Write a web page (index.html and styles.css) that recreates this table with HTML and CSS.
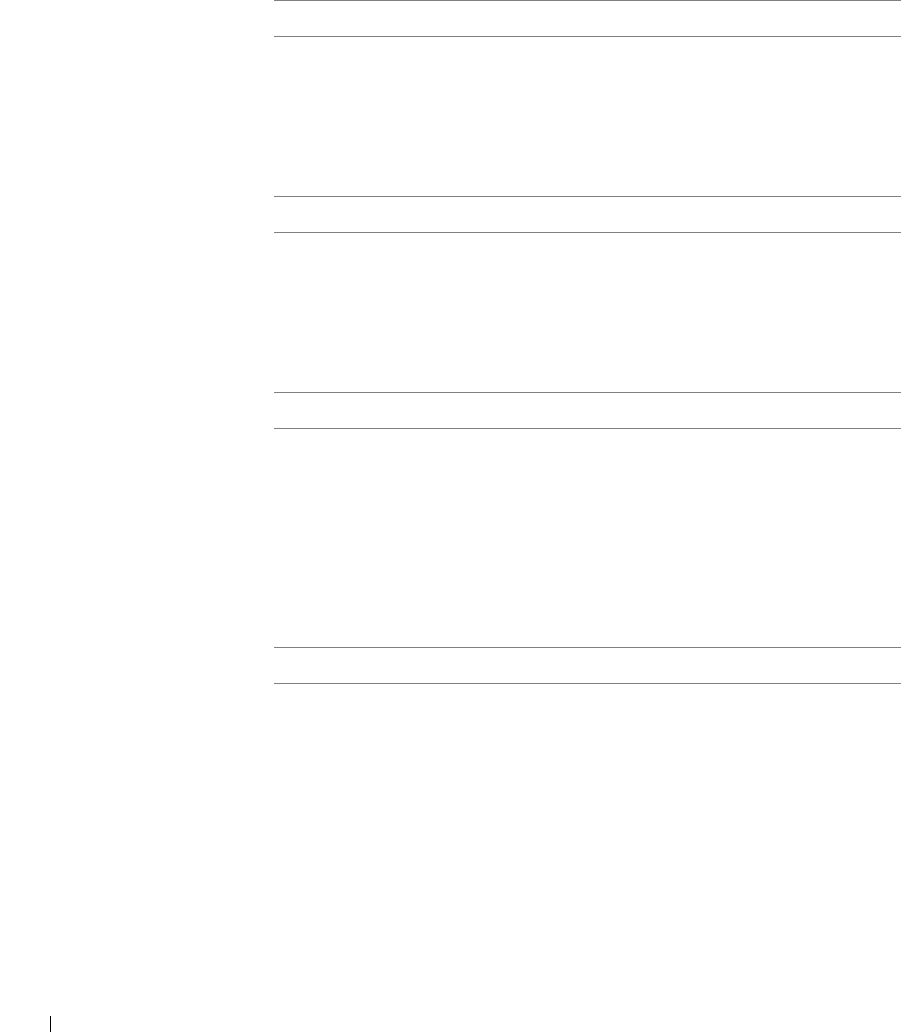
FILE: index.html
```html
<!DOCTYPE html>
<html>
<head>
<meta charset="utf-8">
<link rel="stylesheet" href="styles.css">
</head>
<body>
<div class="page">
  <div class="content">
    <section class="block">
      <div class="head"></div>
      <div class="body"></div>
    </section>
    <section class="block">
      <div class="head"></div>
      <div class="body"></div>
    </section>
    <section class="block">
      <div class="head"></div>
      <div class="body tall"></div>
    </section>
    <section class="block">
      <div class="head"></div>
    </section>
  </div>
  <div class="footer">
    <div class="caret"></div>
  </div>
</div>
</body>
</html>
```
FILE: styles.css
```css
html, body {
  margin: 0;
  padding: 0;
  background: #ffffff;
  font-family: "Liberation Sans", Arial, sans-serif;
  overflow: hidden;
}
.page {
  width: 901px;
  height: 1032px;
  display: flex;
  flex-direction: column;
}
.content {
  padding-left: 274px;
  display: flex;
  flex-direction: column;
}
.head {
  height: 35px;
  border-top: 1px solid #808080;
  border-bottom: 1px solid #808080;
}
.body {
  height: 159px;
}
.body.tall {
  height: 218px;
}
.footer {
  margin-top: auto;
  padding-left: 50px;
}
.caret {
  width: 1px;
  height: 16px;
  background: #000000;
}
```
